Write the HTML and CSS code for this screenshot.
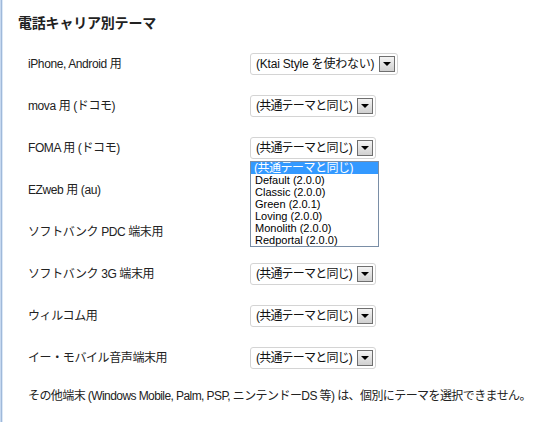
FILE: index.html
```html
<!DOCTYPE html>
<html lang="ja">
<head>
<meta charset="utf-8">
<link rel="stylesheet" href="styles.css">
</head>
<body>
<div class="page">
  <h3 class="title">電話キャリア別テーマ</h3>
  <div class="rows">
    <div class="row"><span class="label">iPhone, Android 用</span>
      <div class="select wide"><span class="value">(Ktai Style を使わない)</span><span class="btn"></span></div></div>
    <div class="row"><span class="label">mova 用 (ドコモ)</span>
      <div class="select"><span class="value">(共通テーマと同じ)</span><span class="btn"></span></div></div>
    <div class="row"><span class="label">FOMA 用 (ドコモ)</span>
      <div class="select open"><span class="value">(共通テーマと同じ)</span><span class="btn"></span>
        <ul class="list">
          <li class="sel">(共通テーマと同じ)</li>
          <li>Default (2.0.0)</li>
          <li>Classic (2.0.0)</li>
          <li>Green (2.0.1)</li>
          <li>Loving (2.0.0)</li>
          <li>Monolith (2.0.0)</li>
          <li>Redportal (2.0.0)</li>
        </ul>
      </div></div>
    <div class="row"><span class="label">EZweb 用 (au)</span>
      <div class="select covered"><span class="value">(共通テーマと同じ)</span><span class="btn"></span></div></div>
    <div class="row"><span class="label">ソフトバンク PDC 端末用</span>
      <div class="select covered"><span class="value">(共通テーマと同じ)</span><span class="btn"></span></div></div>
    <div class="row"><span class="label">ソフトバンク 3G 端末用</span>
      <div class="select"><span class="value">(共通テーマと同じ)</span><span class="btn"></span></div></div>
    <div class="row"><span class="label">ウィルコム用</span>
      <div class="select"><span class="value">(共通テーマと同じ)</span><span class="btn"></span></div></div>
    <div class="row"><span class="label">イー・モバイル音声端末用</span>
      <div class="select"><span class="value">(共通テーマと同じ)</span><span class="btn"></span></div></div>
  </div>
  <p class="note">その他端末 (Windows Mobile, Palm, PSP, ニンテンドーDS 等) は、個別にテーマを選択できません。</p>
</div>
</body>
</html>
```
FILE: styles.css
```css
html, body {
  margin: 0;
  padding: 0;
  background: #ffffff;
}
body {
  width: 556px;
  height: 422px;
  overflow: hidden;
  font-family: "Liberation Sans", "Noto Sans CJK JP", sans-serif;
  font-size: 12px;
  letter-spacing: -0.4px;
  color: #222;
}
.page {
  height: 422px;
  border-left: 1px solid #c6d8ef;
  box-shadow: inset 1px 0 0 #9fb9da, inset 2px 0 0 #dce8f6;
  padding-left: 17px;
  box-sizing: border-box;
}
.title {
  margin: 0;
  padding-top: 13px;
  height: 30px;
  box-sizing: border-box;
  font-family: "Noto Sans CJK JP", sans-serif;
  font-size: 14px;
  line-height: 18px;
  font-weight: bold;
  color: #222;
  letter-spacing: -0.2px;
}
.rows {
  display: flex;
  flex-direction: column;
  padding-left: 10px;
  margin-top: 13px;
}
.row {
  display: grid;
  grid-template-columns: 222px auto;
  align-items: center;
  height: 42px;
}
.label {
  line-height: 16px;
}
.select {
  position: relative;
  width: 126px;
  height: 22px;
  box-sizing: border-box;
  border: 1px solid #d4d4d4;
  border-radius: 3px;
  display: flex;
  align-items: center;
  padding-left: 5px;
  padding-right: 2px;
  background: #fff;
}
.select.wide {
  width: 148px;
}
.select.covered .value {
  visibility: hidden;
}
.value {
  flex: 1;
  white-space: nowrap;
  line-height: 16px;
  color: #111;
  letter-spacing: -0.8px;
}
.select.wide .value {
  letter-spacing: -0.2px;
}
.btn {
  width: 16px;
  height: 16px;
  box-sizing: border-box;
  border: 1px solid #6f6f6f;
  background: linear-gradient(#f4f4f4, #d0d0d0);
  position: relative;
  flex: none;
}
.btn::after {
  content: "";
  position: absolute;
  left: 3px;
  top: 5px;
  border-left: 4px solid transparent;
  border-right: 4px solid transparent;
  border-top: 4px solid #000;
}
.list {
  position: absolute;
  left: -1px;
  top: 23px;
  width: 127px;
  margin: 0;
  padding: 0;
  list-style: none;
  border: 1px solid #7a8ea6;
  background: #fff;
  z-index: 5;
  font-size: 11px;
  letter-spacing: 0;
}
.list li {
  height: 12px;
  line-height: 12px;
  padding-left: 4px;
  color: #000;
  white-space: nowrap;
  overflow: hidden;
}
.list li.sel {
  background: #3399ff;
  color: #fff;
  font-size: 12px;
  letter-spacing: -0.5px;
  padding-left: 3px;
}
.note {
  margin: 9px 0 0 10px;
  line-height: 16px;
  white-space: nowrap;
  letter-spacing: -0.58px;
}
```
